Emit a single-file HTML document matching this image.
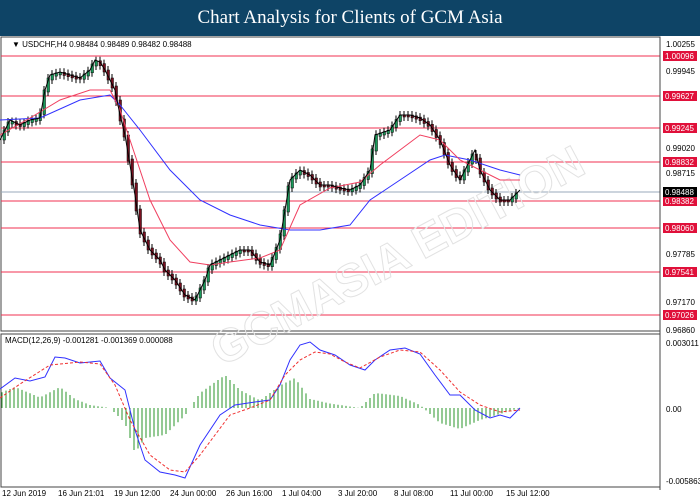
<!DOCTYPE html>
<html><head><meta charset="utf-8"><style>
body{margin:0;width:700px;height:500px;background:#fff;overflow:hidden;font-family:"Liberation Sans",sans-serif}
.t{position:absolute;left:0;top:0;width:700px;height:36px;background:#0e4466;color:#fff;font-family:"Liberation Serif",serif;font-size:19px;text-align:center;line-height:36px;z-index:2}
svg{position:absolute;left:0;top:0}
text{font-family:"Liberation Sans",sans-serif;font-size:8px}
</style></head><body>
<div class="t">Chart Analysis for Clients of GCM Asia</div>
<svg width="700" height="500" id="s">
<rect x="1" y="37" width="659" height="294" fill="none" stroke="#444"/>
<rect x="1" y="334" width="659" height="153" fill="none" stroke="#444"/>
<g id="lv"></g>
<text x="170" y="300" transform="rotate(-28 330 230)" fill="none" stroke="#e2e2e2" style="font-size:46px;font-weight:bold">GCMASIA EDITION</text>
<g id="cd"></g>
<polyline fill="none" stroke="#3030ff" stroke-width="1" points="0,120 40,118 80,100 110,95 120,105 140,130 170,170 200,200 230,215 260,225 290,230 320,230 350,225 370,200 400,180 430,160 445,155 470,160 500,170 520,175"/>
<polyline fill="none" stroke="#f04060" stroke-width="1" points="0,135 30,118 60,100 90,90 110,90 120,110 130,140 150,200 170,240 190,262 210,265 230,262 260,258 280,250 300,205 330,188 360,182 380,165 400,150 420,135 440,140 460,160 480,170 500,180 520,180"/>
<polyline fill="none" stroke="#000" stroke-width="1" points="0,140 10,120 20,125 30,120 40,118 45,90 50,75 60,72 70,75 80,78 90,70 95,60 100,62 105,70 110,80 115,90 120,115 125,135 130,165 135,195 140,230 150,250 160,260 165,270 175,280 185,295 195,300 205,280 210,265 220,260 230,255 240,250 250,250 260,262 270,265 280,240 290,180 300,170 310,175 320,185 330,185 340,188 350,190 360,185 370,170 375,135 390,130 400,115 410,115 420,118 430,125 440,140 450,165 460,180 470,160 475,150 480,170 490,190 500,200 510,200 520,190"/>
<g id="hist"></g>
<polyline fill="none" stroke="#3030ff" points="0,389 15,378 30,381 45,377 55,357 65,358 80,363 100,361 110,378 125,390 135,430 145,460 160,472 175,475 185,478 200,445 220,415 235,405 255,402 270,400 280,385 290,360 300,345 310,342 320,350 335,355 350,365 365,370 375,360 390,350 405,348 420,354 435,375 450,395 460,395 475,410 490,418 500,415 510,418 520,408"/>
<polyline fill="none" stroke="#f03030" stroke-dasharray="3,2" points="0,398 20,384 50,365 80,362 100,364 115,385 130,420 150,455 170,470 185,472 200,455 215,435 230,415 250,408 270,400 285,375 300,360 315,352 330,354 345,362 360,368 380,357 400,350 420,352 440,370 460,392 480,405 500,412 520,410"/>
<text x="12" y="47" style="font-size:8px">▼ USDCHF,H4  0.98484 0.98489 0.98482 0.98488</text>
<text x="5" y="343">MACD(12,26,9) -0.001281 -0.001369 0.000088</text>
<g id="ax"></g>
</svg>
<script>
(function(){
var s='',lv=[[56,'1.00096'],[96,'0.99627'],[128,'0.99245'],[162,'0.98832'],[201,'0.98382'],[228,'0.98060'],[272,'0.97541'],[315,'0.97026']];
lv.forEach(function(l){s+='<line x1="1" x2="660" y1="'+l[0]+'" y2="'+l[0]+'" stroke="#f03050"/><rect x="663" y="'+(l[0]-5)+'" width="34" height="10" fill="#e0103a"/><text x="665" y="'+(l[0]+3)+'" fill="#fff">'+l[1]+'</text>';});
s='<line x1="1" x2="660" y1="192" y2="192" stroke="#9ab"/>'+s;
var ax=[[44,'1.00255'],[71,'0.99945'],[148,'0.99020'],[173,'0.98715'],[254,'0.97785'],[302,'0.97170'],[330,'0.96860'],[343,'0.003011'],[409,'0.00'],[481,'-0.005863']];
var a='<rect x="663" y="187" width="34" height="10" fill="#000"/><text x="665" y="195" fill="#fff">0.98488</text>';
ax.forEach(function(l){a+='<text x="666" y="'+(l[0]+3)+'">'+l[1]+'</text>';});
var xl=['12 Jun 2019','16 Jun 21:01','19 Jun 12:00','24 Jun 00:00','26 Jun 16:00','1 Jul 04:00','3 Jul 20:00','8 Jul 08:00','11 Jul 00:00','15 Jul 12:00'];
xl.forEach(function(t,i){a+='<text x="'+(2+i*56)+'" y="496">'+t+'</text>';});
a+='<line x1="660" x2="660" y1="37" y2="490" stroke="#444"/>';
document.getElementById('lv').innerHTML=s;document.getElementById('ax').innerHTML=a;
function interp(arr,x){var i=0;while(i<arr.length-2&&arr[i+1][0]<x)i++;var f=(x-arr[i][0])/(arr[i+1][0]-arr[i][0]);return arr[i][1]+f*(arr[i+1][1]-arr[i][1]);}
var raw="0,140 10,120 20,125 30,120 40,118 45,90 50,75 60,72 70,75 80,78 90,70 95,60 100,62 105,70 110,80 115,90 120,115 125,135 130,165 135,195 140,230 150,250 160,260 165,270 175,280 185,295 195,300 205,280 210,265 220,260 230,255 240,250 250,250 260,262 270,265 280,240 290,180 300,170 310,175 320,185 330,185 340,188 350,190 360,185 370,170 375,135 390,130 400,115 410,115 420,118 430,125 440,140 450,165 460,180 470,160 475,150 480,170 490,190 500,200 510,200 520,190";
var pts=raw.split(' ').map(function(p){var q=p.split(',');return [parseFloat(q[0]),parseFloat(q[1])];});
var c='';for(var x=3;x<518;x+=4){var y0=interp(pts,x-2),y1=interp(pts,x+2);var up=y1<y0;var tp=Math.min(y0,y1),bt=Math.max(y0,y1)+2;var wt=Math.max(40,tp-4),wb=Math.min(330,bt+4);c+='<line x1="'+(x+1)+'" x2="'+(x+1)+'" y1="'+wt.toFixed(1)+'" y2="'+wb.toFixed(1)+'" stroke="#000"/><rect x="'+x+'" y="'+tp.toFixed(1)+'" width="2.5" height="'+(bt-tp).toFixed(1)+'" fill="'+(up?'#1a9a5a':'#7a1020')+'" stroke="#000" stroke-width="0.5"/>';}
document.getElementById('cd').innerHTML=c;
var h=[[0,-10],[15,-14],[40,-7],[60,-14],[75,-6],[90,-2],[110,0],[125,10],[135,30],[145,20],[165,18],[185,5],[200,-10],[225,-22],[240,-12],[260,-5],[280,-15],[295,-20],[310,-6],[330,-3],[360,0],[375,-10],[400,-8],[420,-2],[440,10],[460,14],[480,8],[500,4],[520,0]];
var g='';for(var x2=2;x2<520;x2+=4){var v=interp(h,x2);g+='<line x1="'+x2+'" x2="'+x2+'" y1="408" y2="'+(408+v*3/2).toFixed(1)+'" stroke="#2a962a"/>';}
document.getElementById('hist').innerHTML=g;
})();
</script>
</body></html>
